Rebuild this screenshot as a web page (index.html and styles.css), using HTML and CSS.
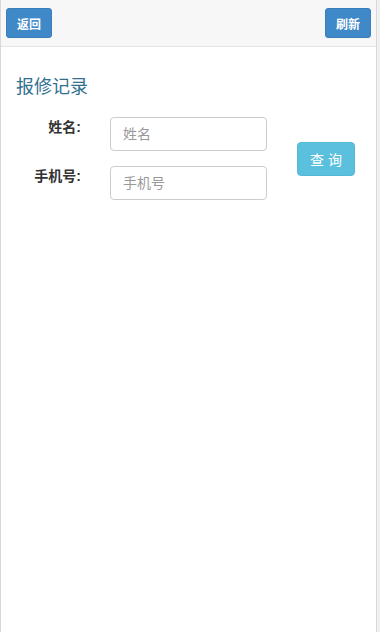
FILE: index.html
```html
<!DOCTYPE html>
<html lang="zh">
<head>
<meta charset="utf-8">
<link rel="stylesheet" href="styles.css">
</head>
<body>
<div class="page">
  <div class="topbar">
    <button class="btn btn-primary">返回</button>
    <button class="btn btn-primary">刷新</button>
  </div>
  <div class="content">
    <h3 class="title">报修记录</h3>
    <div class="search">
      <div class="fields">
        <div class="row">
          <label class="label">姓名:</label>
          <input class="input" type="text" placeholder="姓名">
        </div>
        <div class="row">
          <label class="label">手机号:</label>
          <input class="input" type="text" placeholder="手机号">
        </div>
      </div>
      <button class="btn btn-info">查 询</button>
    </div>
  </div>
</div>
</body>
</html>
```
FILE: styles.css
```css
html {
  background: #f0f0f0;
}
body {
  margin: 0;
  font-family: "Liberation Sans", "Noto Sans CJK SC", sans-serif;
  color: #333;
}
.page {
  width: 375px;
  min-height: 632px;
  background: #fff;
  border-left: 1px solid #d8d8d8;
  border-right: 1px solid #d8d8d8;
  box-sizing: content-box;
}
.topbar {
  height: 47px;
  background: #f7f7f7;
  border-bottom: 1px solid #e3e3e3;
  display: flex;
  justify-content: space-between;
  align-items: flex-start;
  padding: 8px 5px 0 5px;
  box-sizing: border-box;
}
.btn {
  border: 1px solid transparent;
  border-radius: 3px;
  color: #fff;
  font-family: inherit;
  cursor: pointer;
}
.btn-primary {
  width: 46px;
  height: 30px;
  background: #3f89c9;
  border-color: #3a7fba;
  font-size: 12px;
  font-weight: bold;
  padding: 0;
}
.content {
  padding: 0 15px;
}
.title {
  margin: 29px 0 0 0;
  font-size: 18px;
  font-weight: normal;
  color: #31708f;
  line-height: 22px;
}
.search {
  display: flex;
  align-items: center;
  margin-top: 19px;
}
.fields {
  display: flex;
  flex-direction: column;
  gap: 15px;
}
.row {
  display: flex;
  align-items: flex-start;
}
.label {
  width: 65px;
  text-align: right;
  font-size: 14px;
  font-weight: bold;
  color: #333;
  padding-top: 2px;
  line-height: 16px;
}
.input {
  margin-left: 29px;
  width: 157px;
  height: 34px;
  box-sizing: border-box;
  border: 1px solid #ccc;
  border-radius: 4px;
  padding: 0 12px;
  font-size: 14px;
  font-family: inherit;
  color: #555;
}
.input::placeholder {
  color: #999;
}
.btn-info {
  margin-left: 30px;
  width: 58px;
  height: 34px;
  background: #5bc0de;
  border-color: #53b7d6;
  border-radius: 4px;
  font-size: 14px;
  padding: 0;
  margin-top: 1px;
}
```
